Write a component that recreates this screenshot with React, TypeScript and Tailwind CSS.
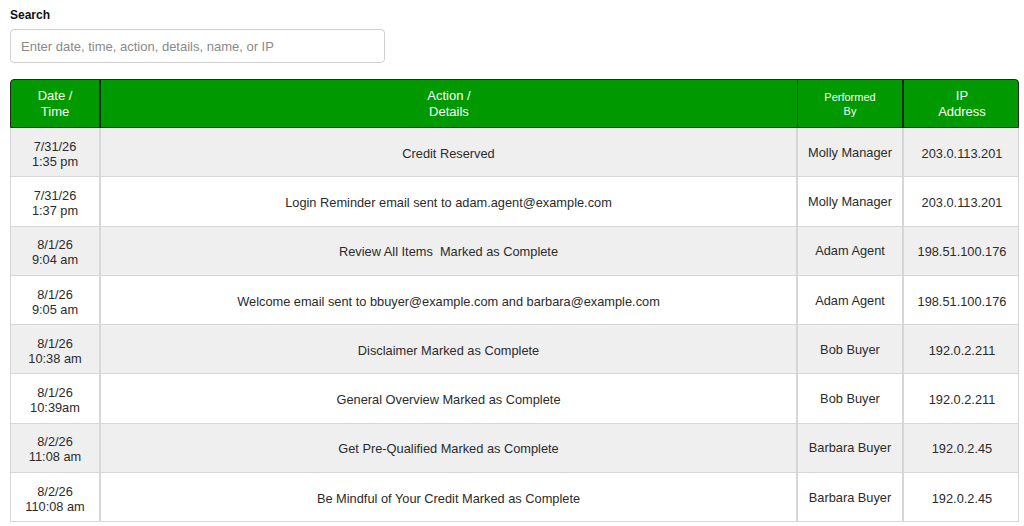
import React from 'react';

interface LogEntry {
  date: string;
  time: string;
  action: string;
  by: string;
  ip: string;
}

const entries: LogEntry[] = [
  { date: '7/31/26', time: '1:35 pm', action: 'Credit Reserved', by: 'Molly Manager', ip: '203.0.113.201' },
  { date: '7/31/26', time: '1:37 pm', action: 'Login Reminder email sent to adam.agent@example.com', by: 'Molly Manager', ip: '203.0.113.201' },
  { date: '8/1/26', time: '9:04 am', action: 'Review All Items\u00a0 Marked as Complete', by: 'Adam Agent', ip: '198.51.100.176' },
  { date: '8/1/26', time: '9:05 am', action: 'Welcome email sent to bbuyer@example.com and barbara@example.com', by: 'Adam Agent', ip: '198.51.100.176' },
  { date: '8/1/26', time: '10:38 am', action: 'Disclaimer Marked as Complete', by: 'Bob Buyer', ip: '192.0.2.211' },
  { date: '8/1/26', time: '10:39am', action: 'General Overview Marked as Complete', by: 'Bob Buyer', ip: '192.0.2.211' },
  { date: '8/2/26', time: '11:08 am', action: 'Get Pre-Qualified Marked as Complete', by: 'Barbara Buyer', ip: '192.0.2.45' },
  { date: '8/2/26', time: '110:08 am', action: 'Be Mindful of Your Credit Marked as Complete', by: 'Barbara Buyer', ip: '192.0.2.45' },
];

const cols = 'grid grid-cols-[90px_697px_106px_116px]';

export default function App() {
  return (
    <div className="bg-white min-h-[526px] px-[10px] pt-[8px] text-[#2b2b2b] font-['Liberation_Sans',Arial,sans-serif]">
      <label className="block text-[12px] font-bold text-[#111] leading-[15px]">Search</label>
      <input
        className="mt-[6px] w-[375px] h-[34px] px-[10px] text-[13px] border border-[#cfcfcf] rounded-[4px] outline-none placeholder:text-[#8a8a8a]"
        placeholder="Enter date, time, action, details, name, or IP"
      />

      <div className="mt-[16px] w-[1009px]">
        {/* Header */}
        <div className={`${cols} h-[49px] bg-[#009a00] border border-[#1d2b1d] rounded-t-[4px] text-white text-center`}>
          <div className="flex items-center justify-center text-[13px] leading-[16px] border-r-2 border-[#1d2b1d]">
            Date /<br />Time
          </div>
          <div className="flex items-center justify-center text-[13px] leading-[16px] border-r border-[#1d2b1d]">
            Action /<br />Details
          </div>
          <div className="flex items-center justify-center text-[11px] leading-[14px] border-r-2 border-[#1d2b1d]">
            Performed<br />By
          </div>
          <div className="flex items-center justify-center text-[13px] leading-[16px]">
            IP<br />Address
          </div>
        </div>

        {/* Rows */}
        {entries.map((e, i) => (
          <div
            key={i}
            className={`${cols} h-[49.3px] text-[12.8px] leading-[15px] text-center border-x border-b border-[#d6d6d6] ${i % 2 === 0 ? 'bg-[#efefef]' : 'bg-white'}`}
          >
            <div className="flex flex-col items-center justify-center border-r-2 border-[#d6d6d6] pt-[3px]">
              <span>{e.date}</span>
              <span>{e.time}</span>
            </div>
            <div className="flex items-center justify-center border-r-2 border-[#d6d6d6] pt-[2px]">{e.action}</div>
            <div className="flex items-center justify-center border-r-2 border-[#d6d6d6]">{e.by}</div>
            <div className="flex items-center justify-center pt-[2px]">{e.ip}</div>
          </div>
        ))}
      </div>
    </div>
  );
}
